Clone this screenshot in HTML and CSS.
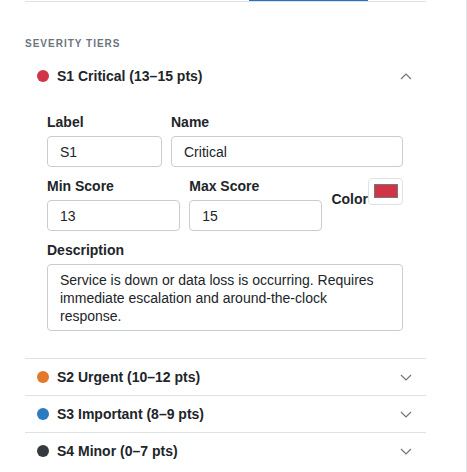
FILE: index.html
```html
<!DOCTYPE html>
<html lang="en">
<head>
  <meta charset="UTF-8">
  <title>Severity Tiers</title>
  <link rel="stylesheet" href="styles.css">
</head>
<body>
  <div class="panel">
    <div class="tabs">
      <span class="tab-active"></span>
    </div>

    <h3 class="section-title">Severity Tiers</h3>

    <div class="tiers">
      <div class="tier open">
        <div class="tier-head">
          <span class="dot dot-red"></span>
          <span class="tier-name">S1 Critical (13–15 pts)</span>
          <svg class="chev" width="12" height="7" viewBox="0 0 12 7"><path d="M1 6 L6 1 L11 6" /></svg>
        </div>
        <div class="tier-body">
          <div class="row row-top">
            <div class="field">
              <label>Label</label>
              <input type="text" value="S1">
            </div>
            <div class="field">
              <label>Name</label>
              <input type="text" value="Critical">
            </div>
          </div>
          <div class="row row-scores">
            <div class="field">
              <label>Min Score</label>
              <input type="number" value="13">
            </div>
            <div class="field">
              <label>Max Score</label>
              <input type="number" value="15">
            </div>
            <div class="color-field">
              <label>Color</label>
              <span class="swatch"><span class="swatch-fill"></span></span>
            </div>
          </div>
          <div class="field">
            <label>Description</label>
            <textarea rows="3">Service is down or data loss is occurring. Requires immediate escalation and around-the-clock response.</textarea>
          </div>
        </div>
      </div>

      <div class="tier">
        <div class="tier-head">
          <span class="dot dot-orange"></span>
          <span class="tier-name">S2 Urgent (10–12 pts)</span>
          <svg class="chev" width="12" height="7" viewBox="0 0 12 7"><path d="M1 1 L6 6 L11 1" /></svg>
        </div>
      </div>

      <div class="tier">
        <div class="tier-head">
          <span class="dot dot-blue"></span>
          <span class="tier-name">S3 Important (8–9 pts)</span>
          <svg class="chev" width="12" height="7" viewBox="0 0 12 7"><path d="M1 1 L6 6 L11 1" /></svg>
        </div>
      </div>

      <div class="tier">
        <div class="tier-head">
          <span class="dot dot-dark"></span>
          <span class="tier-name">S4 Minor (0–7 pts)</span>
          <svg class="chev" width="12" height="7" viewBox="0 0 12 7"><path d="M1 1 L6 6 L11 1" /></svg>
        </div>
      </div>
    </div>
  </div>
</body>
</html>
```

FILE: styles.css
```css
body {
  margin: 0;
  font-family: 'Liberation Sans', Arial, sans-serif;
  color: #212529;
  background: #fff;
}

.panel {
  width: 466px;
  height: 472px;
  border-right: 1px solid #e2e4e7;
  overflow: hidden;
}

.tabs {
  margin-left: 25px;
  width: 401px;
  height: 1px;
  border-bottom: 1px solid #dee2e6;
}

.tab-active {
  display: block;
  margin-left: 224px;
  width: 119px;
  height: 1px;
  background-color: #2573c1;
}

.section-title {
  margin: 36px 0 8px 25px;
  font-size: 10px;
  line-height: 12px;
  font-weight: bold;
  letter-spacing: 1px;
  text-transform: uppercase;
  color: #6c757d;
}

.tiers {
  margin-left: 25px;
  width: 401px;
}

.tier + .tier {
  border-top: 1px solid #dee2e6;
}

.tier-head {
  height: 36px;
  display: flex;
  align-items: center;
  padding: 0 14px 0 12px;
}

.dot {
  width: 12px;
  height: 12px;
  border-radius: 50%;
  margin-right: 8px;
}

.dot-red { background-color: #d13447; }
.dot-orange { background-color: #e2782a; }
.dot-blue { background-color: #2b7bbf; }
.dot-dark { background-color: #343a40; }

.tier-name {
  flex: 1;
  font-size: 14px;
  font-weight: bold;
}

.chev path {
  fill: none;
  stroke: #6c757d;
  stroke-width: 1.2;
}

.tier-body {
  padding: 19px 23px 27px 22px;
}

.row {
  display: flex;
  gap: 9px;
  margin-bottom: 10px;
}

.row-top .field:first-child { width: 115px; }
.row-top .field:last-child { flex: 1; }

.row-scores .field { width: 134px; }

label {
  display: block;
  font-size: 14px;
  line-height: 18px;
  font-weight: bold;
  margin-bottom: 5px;
}

input[type="text"],
input[type="number"],
textarea {
  display: block;
  box-sizing: border-box;
  width: 100%;
  height: 31px;
  margin: 0;
  padding: 0 12px;
  border: 1px solid #c9cdd2;
  border-radius: 4px;
  font-family: 'Liberation Sans', Arial, sans-serif;
  font-size: 14px;
  color: #212529;
  background: #fff;
  appearance: textfield;
}

textarea {
  height: 67px;
  padding: 6px 12px;
  line-height: 18px;
  resize: none;
  overflow: hidden;
}

.color-field {
  display: flex;
  align-items: flex-start;
}

.color-field label {
  margin: 13px 0 0 0;
}

.swatch {
  display: block;
  box-sizing: border-box;
  width: 35px;
  height: 27px;
  margin-top: 1px;
  padding: 5px 4px 6px 5px;
  border: 1px solid #dee2e6;
  border-radius: 4px;
}

.swatch-fill {
  display: block;
  height: 100%;
  background-color: #d13447;
  border: 1px solid #777;
  box-sizing: border-box;
}
```
